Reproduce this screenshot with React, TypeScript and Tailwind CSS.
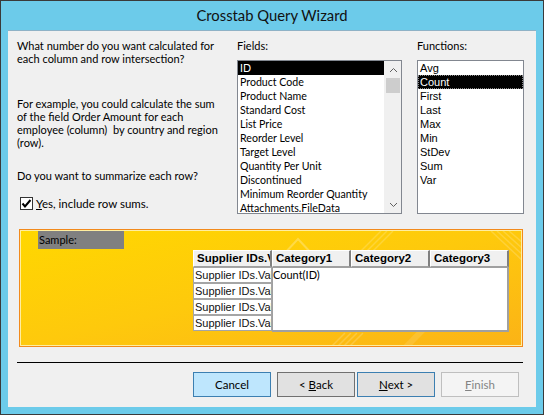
import React from "react";

const fields = [
  "ID",
  "Product Code",
  "Product Name",
  "Standard Cost",
  "List Price",
  "Reorder Level",
  "Target Level",
  "Quantity Per Unit",
  "Discontinued",
  "Minimum Reorder Quantity",
  "Attachments.FileData",
];

const functions = ["Avg", "Count", "First", "Last", "Max", "Min", "StDev", "Sum", "Var"];

function WinButton({
  children,
  kind,
}: {
  children: React.ReactNode;
  kind: "hot" | "normal" | "default" | "disabled";
}) {
  const styles = {
    hot: "bg-[#bee6fd] border-[#3c7fb1] text-black",
    normal: "bg-[#e1e1e1] border-[#707070] text-black",
    default: "bg-[#e1e1e1] border-[#3c7fb1] text-black",
    disabled: "bg-[#f4f4f4] border-[#bfbfbf] text-[#838383]",
  }[kind];
  return (
    <div className={`w-[78px] h-[25px] border flex items-center justify-center text-[11.5px] ${styles}`}>
      {children}
    </div>
  );
}

function HeaderCell({ children }: { children: React.ReactNode }) {
  return (
    <div className="w-[79px] h-[17px] bg-[#f0f0f0] border-t border-l border-white border-r-2 border-b border-r-[#808080] border-b-[#a0a0a0] pl-[3px] text-[11.5px] font-bold leading-[15px] whitespace-nowrap overflow-hidden">
      {children}
    </div>
  );
}

export default function App() {
  return (
    <div className="w-[544px] h-[415px] bg-[#6ccbea] border border-[#3a3a3a] flex flex-col font-['Lato','Open_Sans',sans-serif] text-black">
      {/* title bar */}
      <div className="h-[29px] flex items-center justify-center text-[14.8px] text-[#111]">
        Crosstab Query Wizard
      </div>

      {/* client area */}
      <div className="mx-[7px] mb-[7px] flex-1 bg-[#f0f0f0] border-t border-[#8fb2c6] flex flex-col">
        <div className="flex pl-[9px] pt-[8px]">
          {/* explanation column */}
          <div className="w-[220px] text-[11px] leading-[13px]">
            <p>
              What number do you want calculated for
              <br />
              each column and row intersection?
            </p>
            <p className="mt-[32px]">
              For example, you could calculate the sum
              <br />
              of the field Order Amount for each
              <br />
              employee (column)&nbsp; by country and region
              <br />
              (row).
            </p>
            <p className="mt-[20px]">Do you want to summarize each row?</p>
            <div className="mt-[15px] ml-[3px] flex items-center gap-[3px]">
              <div className="w-[13px] h-[13px] border border-[#333] bg-white flex items-center justify-center">
                <svg width="11" height="11" viewBox="0 0 11 11">
                  <path d="M1.5 5.5 L4 8.5 L9.5 2" fill="none" stroke="#000" strokeWidth="2" />
                </svg>
              </div>
              <span className="text-[11.5px]">
                <span className="underline">Y</span>es, include row sums.
              </span>
            </div>
          </div>

          {/* fields */}
          <div className="w-[165px] text-[11px]">
            <div className="leading-[13px]">Fields:</div>
            <div className="mt-[8px] h-[154px] border border-[#828790] bg-white flex text-[10.6px]">
              <div className="flex-1 overflow-hidden">
                {fields.map((f, i) => (
                  <div
                    key={f}
                    className={`h-[14px] leading-[14px] pl-[2px] whitespace-nowrap ${
                      i === 0 ? "bg-black text-white" : ""
                    }`}
                  >
                    {f}
                  </div>
                ))}
              </div>
              {/* scrollbar */}
              <div className="w-[17px] bg-[#f0f0f0] border-l border-[#f0f0f0] flex flex-col">
                <div className="h-[17px] flex items-center justify-center">
                  <svg width="9" height="6" viewBox="0 0 9 6">
                    <path d="M1 5 L4.5 1.5 L8 5" fill="none" stroke="#606060" strokeWidth="1" />
                  </svg>
                </div>
                <div className="h-[15px] mx-[1px] bg-[#cdcdcd]" />
                <div className="flex-1" />
                <div className="h-[17px] flex items-center justify-center">
                  <svg width="9" height="6" viewBox="0 0 9 6">
                    <path d="M1 1 L4.5 4.5 L8 1" fill="none" stroke="#606060" strokeWidth="1" />
                  </svg>
                </div>
              </div>
            </div>
          </div>

          {/* functions */}
          <div className="ml-[15px] w-[107px]">
            <div className="leading-[13px] text-[11px]">Functions:</div>
            <div className="mt-[8px] h-[154px] border border-[#828790] bg-white font-['Liberation_Sans',Arial,sans-serif] text-[11px]">
              {functions.map((f, i) => (
                <div
                  key={f}
                  className={`h-[14px] leading-[14px] pl-[2px] ${
                    i === 1 ? "bg-black text-white outline-1 outline-dotted outline-offset-[-1px] outline-[#888]" : ""
                  }`}
                >
                  {f}
                </div>
              ))}
            </div>
          </div>
        </div>

        {/* sample */}
        <div className="relative mt-[15px] ml-[11px] w-[504px] h-[118px] border border-[#f28a1c]">
          <div className="relative h-full border border-[#ffeea0] bg-gradient-to-br from-[#ffd700] via-[#fec90c] to-[#fbb316] overflow-hidden font-['Liberation_Sans',Arial,sans-serif]">
            <svg className="absolute inset-0" width="502" height="116" viewBox="0 0 502 116">
              <path d="M262 24 L277 8 L292 24" fill="none" stroke="#fff" strokeOpacity="0.25" strokeWidth="2" />
              <g stroke="#fff" strokeOpacity="0.18" strokeWidth="1.5">
                <path d="M340 20 L360 0" />
                <path d="M346 20 L366 0" />
                <path d="M352 20 L372 0" />
                <path d="M310 116 L324 102" />
                <path d="M316 116 L330 102" />
                <path d="M322 116 L336 102" />
                <path d="M328 116 L342 102" />
                <path d="M470 0 L502 30" />
                <path d="M476 0 L502 24" />
                <path d="M482 0 L502 18" />
                <path d="M488 0 L502 12" />
              </g>
              <path d="M385 116 L440 60" stroke="#fff" strokeOpacity="0.12" strokeWidth="6" />
            </svg>
            <div className="relative flex flex-col">
              <div className="ml-[17px] w-[86px] h-[18px] bg-[#808080] text-[11px] leading-[18px] pl-[1px] font-['Lato',sans-serif]">
                Sample:
              </div>
              <div className="ml-[172px] mt-[1px] flex flex-col">
                <div className="flex">
                  <HeaderCell>Supplier IDs.Value</HeaderCell>
                  <HeaderCell>Category1</HeaderCell>
                  <HeaderCell>Category2</HeaderCell>
                  <HeaderCell>Category3</HeaderCell>
                </div>
                <div className="flex">
                  <div className="w-[79px] flex flex-col text-[11px]">
                    {[0, 1, 2, 3].map((i) => (
                      <div
                        key={i}
                        className="h-[16px] bg-white border border-[#a5a5a5] leading-[14px] pl-[1px] whitespace-nowrap overflow-hidden text-[#111]"
                      >
                        Supplier IDs.Value
                      </div>
                    ))}
                  </div>
                  <div className="w-[237px] h-[65px] bg-white border border-[#a0a0a0] border-b-2 border-r-2 text-[11px] leading-[14px] font-['Lato',sans-serif]">
                    Count(ID)
                  </div>
                </div>
              </div>
            </div>
          </div>
        </div>

        {/* separator */}
        <div className="mt-[15px] ml-[9px] w-[506px] h-px bg-black" />

        {/* buttons */}
        <div className="mt-[9px] flex justify-end pr-[17px]">
          <WinButton kind="hot">Cancel</WinButton>
          <div className="w-[6px]" />
          <WinButton kind="normal">
            &lt; <span className="underline ml-[3px]">B</span>ack
          </WinButton>
          <div className="w-[2px]" />
          <WinButton kind="default">
            <span className="underline">N</span>ext &gt;
          </WinButton>
          <div className="w-[6px]" />
          <WinButton kind="disabled">
            <span className="underline">F</span>inish
          </WinButton>
        </div>
      </div>
    </div>
  );
}
